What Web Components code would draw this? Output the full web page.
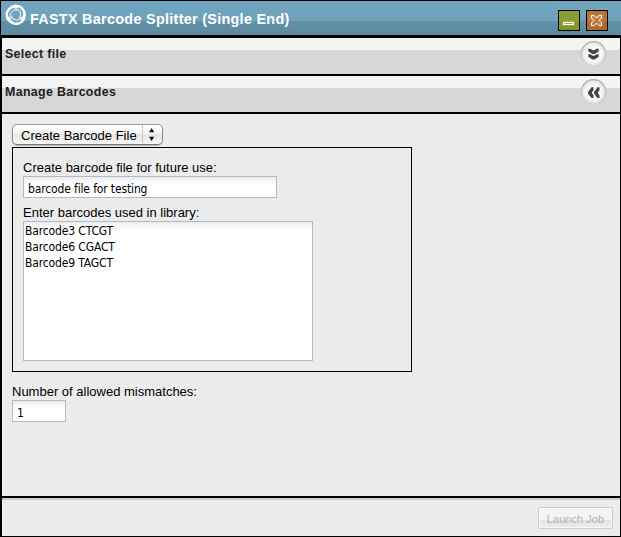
<!DOCTYPE html>
<html lang="en"><head><meta charset="utf-8"><title>FASTX Barcode Splitter</title>
<style>html,body{margin:0;height:537px;overflow:hidden;background:#000}body{font:13px/16px "Liberation Sans",Arial,sans-serif;color:#000}</style></head>
<body>
<job-window>
  <title-bar slot="title">FASTX Barcode Splitter (Single End)</title-bar>
  <section-bar state="closed">Select file</section-bar>
  <section-bar state="open">Manage Barcodes</section-bar>
  <barcode-form></barcode-form>
  <job-footer slot="footer">Launch Job</job-footer>
</job-window>
<script>
function define(name, html){
  customElements.define(name, class extends HTMLElement{
    constructor(){super();this.attachShadow({mode:'open'}).innerHTML=html;}
  });
}
define('job-window',`<style>
:host{display:flex;flex-direction:column;box-sizing:border-box;width:621px;height:537px;background:#000;padding:1px 0 1px 1px}
main{display:flex;flex-direction:column;gap:2px;margin:3px 1px 2px 1px}
.f{margin:0 1px}
</style><slot name="title"></slot><main><slot></slot></main><div class="f"><slot name="footer"></slot></div>`);

const swirl='<path stroke-width="2.1" d="M3 15.8C-.5 8 5 1.6 12 3"/><path stroke-width="1" opacity=".85" d="M6 14.8C3.4 9.8 6.4 5.8 12 6.2"/><path stroke-width="1" d="M1 9.6C2.5 3.5 8 -.8 15.5 2.2"/>';
define('title-bar',`<style>
:host{display:flex;height:34px;box-sizing:border-box;background:linear-gradient(#71a5c0 0,#6fa2bc 20px,#618fa5 20px,#5d8ba0 34px);color:#fff;font-weight:bold;font-size:14.4px;line-height:16px}
.logo{margin:3px 0 0 4px;width:22px;height:22px;flex:none}
.t{margin:10px 0 0 3px;flex:1;letter-spacing:.29px;white-space:nowrap}
.b{display:flex;gap:6px;margin:9px 13px 0 0}
</style>
<svg class="logo" viewBox="0 0 22 22" fill="none" stroke="#fff" stroke-linecap="round">
<g>${swirl}</g><g transform="rotate(120 10.8 10.8)">${swirl}</g><g transform="rotate(240 10.8 10.8)">${swirl}</g></svg>
<div class="t"><slot></slot></div>
<div class="b"><window-button kind="min"></window-button><window-button kind="close"></window-button></div>`);

customElements.define('window-button',class extends HTMLElement{
 connectedCallback(){
  const min=this.getAttribute('kind')==='min';
  this.attachShadow({mode:'open'}).innerHTML=`<style>:host{display:block;width:22px;height:21px}svg{display:block}.g{filter:drop-shadow(0 0 1.5px rgba(255,255,255,.5))}</style>
  <svg width="22" height="21"><rect x=".5" y=".5" width="21" height="20" fill="${min?'#8a9c32':'#b8722f'}" stroke="#000"/>
  <rect x="1" y="12" width="20" height="8" fill="${min?'#82952b':'#ad6828'}"/>
  ${min?'<rect class="g" x="5.5" y="12.5" width="10" height="2" fill="none" stroke="#fff"/>':
  '<path class="g" d="M5.5 5.5H8L10.5 8 13 5.5h2.5V8L13 10.5l2.5 2.5v2.5H13L10.5 13 8 15.5H5.5V13L8 10.5 5.5 8z" fill="none" stroke="#fff"/>'}</svg>`;
 }});

customElements.define('section-bar',class extends HTMLElement{
 connectedCallback(){
  const open=this.getAttribute('state')==='open';
  this.attachShadow({mode:'open'}).innerHTML=`<style>
:host{display:flex;height:36px;box-sizing:border-box;background:linear-gradient(#f4f4f4 12px,#d7d7d7 12px);font-weight:bold;font-size:12.4px;line-height:16px;color:#222}
.t{flex:1;margin:8px 0 0 3px;letter-spacing:.34px}
svg{margin:2px 12px 0 0;flex:none}</style>
<div class="t"><slot></slot></div>
<svg width="28" height="28" viewBox="0 0 28 28"><defs><radialGradient id="g"><stop offset=".65" stop-color="#f8f8f8"/><stop offset="1" stop-color="#dedede"/></radialGradient><linearGradient id="r" x2="0" y2="1"><stop stop-color="#adadad"/><stop offset="1" stop-color="#d4d4d4"/></linearGradient></defs>
<circle cx="13.5" cy="13.8" r="12.2" fill="url(#g)" stroke="url(#r)" stroke-width="1.3"/>
<path d="${open?'M13.5 9.3v2.7L11.8 14.7l1.7 2.8v2.5h-2L8 15.5v-1.6l3.5-4.6zM19.5 9.3v2.7L17.8 14.7l1.7 2.8v2.5h-2L14 15.5v-1.6l3.5-4.6z':'M8.3 8.8l1.8 0 3.4 1.7 3.4-1.7h1.8v2.4L14.7 14h-2.4l-4-2.8zM8.3 14.3h1.8l3.4 1.7 3.4-1.7h1.8v2.4l-4 2.8h-2.4l-4-2.8z'}" fill="#444"/></svg>`;
 }});

define('text-box',`<style>
:host{display:block;box-sizing:border-box;border:1px solid #b5b8c8;background:linear-gradient(#e6edf0,#f8f8f8 4px,#fff 9px);font:12px/16px "DejaVu Sans Condensed","DejaVu Sans",sans-serif;font-stretch:condensed;letter-spacing:-.14px;white-space:pre}
</style><slot></slot>`);

define('drop-list',`<style>
:host{display:flex;box-sizing:border-box;width:151px;height:21px;border:1px solid #8c8c8c;border-top-color:#999;border-bottom-color:#777;border-radius:5px;background:linear-gradient(#fff,#f4f4f4 45%,#e6e6e6 50%,#f7f7f7);box-shadow:0 1px 1px #bbb}
.t{width:130px;box-sizing:border-box;padding:3px 0 0 8px;border-right:1px solid #c8c8c8;white-space:nowrap}
svg{display:block}</style><div class="t"><slot></slot></div>
<svg width="19" height="19"><path d="M6 7.3L8.6 3l2.6 4.3zM6 11.7l2.6 4.3 2.6-4.3z" fill="#111"/></svg>`);

define('barcode-form',`<style>
:host{display:block;height:382px;box-sizing:border-box;background:#ececec;padding:10px 10px 0}
fieldset{margin:2px 0 0;box-sizing:border-box;width:400px;height:225px;border:1px solid #000;padding:12px 10px 0}
label{display:block;height:16px;white-space:nowrap}
.n{width:254px;height:22px;padding:4px 4px 0;margin:0 0 7px}
.a{width:290px;height:140px;padding:1px 1px}
.m{width:54px;height:22px;padding:4px 4px 0}
.l{margin-top:12px}
</style>
<drop-list>Create Barcode File</drop-list>
<fieldset><label>Create barcode file for future use:</label><text-box class="n">barcode file for testing</text-box>
<label>Enter barcodes used in library:</label><text-box class="a">Barcode3 CTCGT
Barcode6 CGACT
Barcode9 TAGCT</text-box></fieldset>
<label class="l">Number of allowed mismatches:</label><text-box class="m">1</text-box>`);

define('job-footer',`<style>
:host{display:flex;justify-content:flex-end;height:38px;box-sizing:border-box;background:#ececec;border-top:2px solid #ccc;padding:7px 7px 0 0}
button{box-sizing:border-box;width:75px;height:22px;margin:0;padding:1px 0 0;border:1px solid #cdcdcd;border-radius:2px;background:linear-gradient(#f4f4f4 12px,#e2e2e2 12px,#ededed);box-shadow:inset 0 0 0 1px #f7f7f7;color:#b1b1b1;font:11px/16px "Liberation Sans",Arial,sans-serif;letter-spacing:.05px}
</style><button disabled><slot></slot></button>`);
</script></body></html>
